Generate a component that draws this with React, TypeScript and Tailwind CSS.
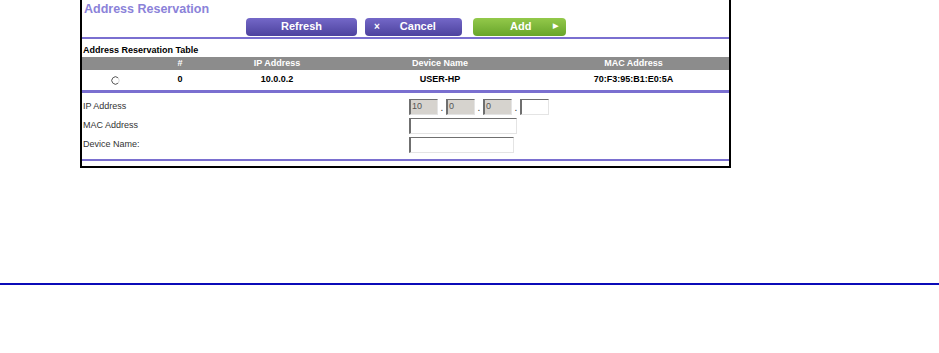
import React from "react";

const font = { fontFamily: '"Liberation Sans", Arial, sans-serif' };

function PurpleButton({ width, children }: { width: string; children: React.ReactNode }) {
  return (
    <div
      className={`${width} h-[18px] rounded-[4px] bg-gradient-to-b from-[#7468c8] to-[#4d429e] flex items-center text-white text-[11px] font-bold`}
    >
      {children}
    </div>
  );
}

function IpBox({ value, disabled }: { value?: string; disabled?: boolean }) {
  return (
    <div
      className={`w-[29px] h-[16px] border-t border-l-2 border-r border-b border-t-[#6f6f6f] border-l-[#6f6f6f] border-r-[#e4e4e4] border-b-[#e4e4e4] ${
        disabled ? "bg-[#d6d3ce]" : "bg-white"
      } text-[9px] leading-[13px] pl-[1px] text-[#555]`}
    >
      {value}
    </div>
  );
}

function TextBox({ width }: { width: string }) {
  return (
    <div
      className={`${width} h-[16px] border-t border-l-2 border-r border-b border-t-[#6f6f6f] border-l-[#6f6f6f] border-r-[#e4e4e4] border-b-[#e4e4e4] bg-white`}
    />
  );
}

export default function App() {
  return (
    <div className="w-[939px] h-[353px] bg-white relative" style={font}>
      <div className="pl-[80px]">
        <div className="w-[651px] h-[168px] border-l-2 border-r-2 border-b-2 border-black flex flex-col">
          {/* Header */}
          <div className="h-[17px] pl-[2px] pt-[3px] text-[12.5px] leading-[13px] font-bold text-[#8b82d9]">
            Address Reservation
          </div>
          <div className="flex items-center h-[19px] pl-[164px]">
            <PurpleButton width="w-[111px]">
              <span className="w-full text-center">Refresh</span>
            </PurpleButton>
            <div className="w-[8px]" />
            <PurpleButton width="w-[97px]">
              <span className="pl-[9px] text-[10px]">×</span>
              <span className="pl-[20px]">Cancel</span>
            </PurpleButton>
            <div className="w-[11px]" />
            <div className="w-[93px] h-[18px] rounded-[4px] bg-gradient-to-b from-[#93c94a] to-[#68a52a] flex items-center text-white text-[11px] font-bold">
              <span className="pl-[37px]">Add</span>
              <span className="pl-[22px] text-[7px]">▶</span>
            </div>
          </div>
          <div className="h-[2px] bg-[#7a6fd0] mt-[1px]" />

          {/* Table */}
          <div className="h-[18px] pl-[1px] pt-[6px] text-[9px] leading-[10px] font-bold text-black">
            Address Reservation Table
          </div>
          <div className="grid grid-cols-[66px_64px_130px_196px_191px] h-[13px] bg-[#8c8c8c] text-white text-[9px] leading-[13px] font-bold text-center">
            <div />
            <div>#</div>
            <div>IP Address</div>
            <div>Device Name</div>
            <div>MAC Address</div>
          </div>
          <div className="grid grid-cols-[66px_64px_130px_196px_191px] h-[20px] items-center text-black text-[9px] font-bold text-center">
            <div className="flex justify-center">
              <svg width="9" height="9" viewBox="0 0 9 9">
                <circle cx="4.5" cy="4.5" r="3.7" fill="white" stroke="#d0d0d0" strokeWidth="0.9" />
                <path d="M7 1.8 A3.7 3.7 0 1 0 7 7.2" fill="none" stroke="#555" strokeWidth="0.9" />
              </svg>
            </div>
            <div>0</div>
            <div>10.0.0.2</div>
            <div>USER-HP</div>
            <div>70:F3:95:B1:E0:5A</div>
          </div>
          <div className="h-[3px] bg-[#7a6fd0]" />

          {/* Form */}
          <div className="flex flex-col gap-[3px] pt-[6px] text-[9px] text-[#333]">
            <div className="flex items-center h-[16px]">
              <div className="w-[327px] pl-[1px]">IP Address</div>
              <div className="flex items-center">
                <IpBox value="10" disabled />
                <span className="w-[8px] text-center text-[10px]">.</span>
                <IpBox value="0" disabled />
                <span className="w-[8px] text-center text-[10px]">.</span>
                <IpBox value="0" disabled />
                <span className="w-[8px] text-center text-[10px]">.</span>
                <IpBox />
              </div>
            </div>
            <div className="flex items-center h-[16px]">
              <div className="w-[327px] pl-[1px]">MAC Address</div>
              <TextBox width="w-[108px]" />
            </div>
            <div className="flex items-center h-[16px]">
              <div className="w-[327px] pl-[1px]">Device Name:</div>
              <TextBox width="w-[105px]" />
            </div>
          </div>
          <div className="h-[2px] bg-[#7a6fd0] mt-[6px]" />
        </div>
      </div>

      <div className="mt-[115px] h-[2px] bg-[#0b0bb8]" />
    </div>
  );
}
